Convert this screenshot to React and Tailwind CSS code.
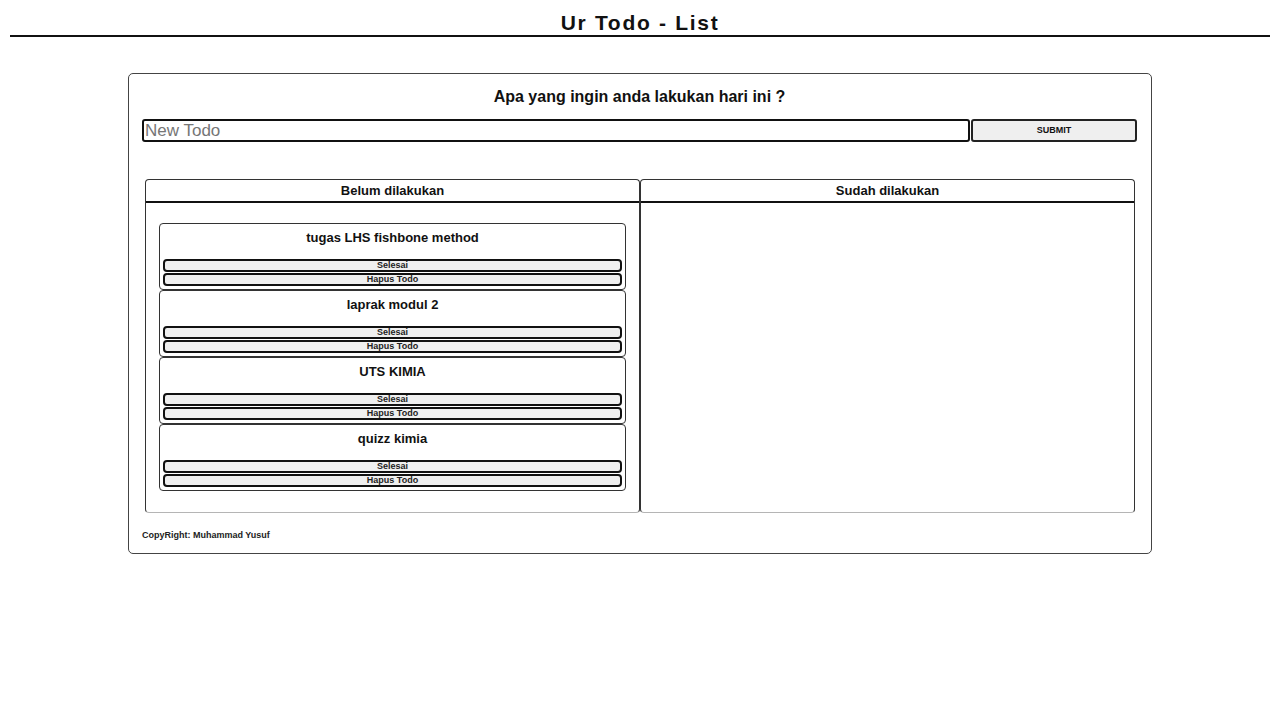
import React from "react";

const todos = ["tugas LHS fishbone method", "laprak modul 2", "UTS KIMIA", "quizz kimia"];

function TodoCard({ title }) {
  return (
    <div className="flex flex-col border border-[#333] rounded-[4px] px-[3px] pt-[6px] pb-[3px]">
      <div className="text-center text-[13px] leading-[16px] font-bold text-[#111]">{title}</div>
      <button className="mt-[13px] h-[13px] border-2 border-[#111] rounded-[4px] bg-[#efefef] text-[9px] leading-[9px] font-bold text-[#222]">
        Selesai
      </button>
      <button className="mt-[1px] h-[13px] border-2 border-[#111] rounded-[4px] bg-[#efefef] text-[9px] leading-[9px] font-bold text-[#222]">
        Hapus Todo
      </button>
    </div>
  );
}

export default function App() {
  return (
    <div className="min-h-[720px] bg-white" style={{ fontFamily: '"Liberation Sans", Arial, sans-serif' }}>
      <div className="mx-[10px] border-b-2 border-[#111] pt-[10px]">
        <h1 className="text-center text-[21px] leading-[25px] font-bold tracking-[1.7px] text-[#111]">Ur Todo - List</h1>
      </div>
      <div className="mx-auto mt-[36px] w-[1024px] border border-[#444] rounded-[5px] pt-[14px] pl-[13px] pr-[14px] pb-[12px]">
        <h2 className="text-center text-[16px] leading-[18px] font-bold text-[#111]">Apa yang ingin anda lakukan hari ini ?</h2>
        <div className="mt-[13px] flex">
          <input
            placeholder="New Todo"
            className="w-[828px] h-[23px] border-2 border-[#111] rounded-[3px] px-[1px] pt-[1px] text-[17px] placeholder:text-[#767676] outline-none"
          />
          <button className="flex-1 ml-[1px] h-[23px] border-2 border-[#222] rounded-[3px] bg-[#efefef] text-[9px] font-bold text-[#111]">
            SUBMIT
          </button>
        </div>
        <div className="mt-[37px] ml-[3px] mr-[2px] flex">
          {["Belum dilakukan", "Sudah dilakukan"].map((h, i) => (
            <div
              key={h}
              className="flex-1 flex flex-col border border-[#333] border-b-[#b5b5b5] rounded-[4px] h-[334px]"
            >
              <div className="border-b-2 border-[#111] h-[23px] text-center text-[13px] leading-[21px] font-bold text-[#111]">
                {h}
              </div>
              {i === 0 && (
                <div className="flex flex-col pt-[20px] px-[13px]">
                  {todos.map((t) => (
                    <TodoCard key={t} title={t} />
                  ))}
                </div>
              )}
            </div>
          ))}
        </div>
        <div className="mt-[16px] text-[9px] leading-[12px] font-bold text-[#222]">CopyRight: Muhammad Yusuf</div>
      </div>
    </div>
  );
}
